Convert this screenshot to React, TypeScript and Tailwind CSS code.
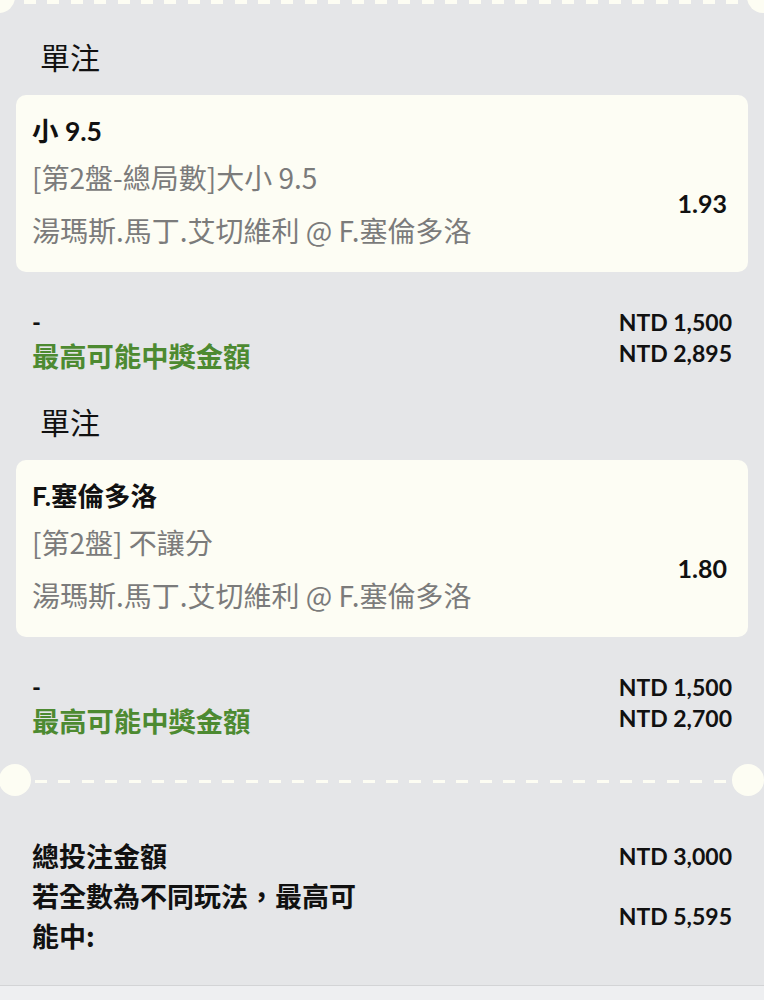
import React from "react";

const latin = "font-['Lato','Noto_Sans_CJK_TC',sans-serif]";
const cjk = "font-['Noto_Sans_CJK_TC','Noto_Sans',sans-serif]";

function Dashes({ className }: { className: string }) {
  return (
    <div
      className={
        "h-[3px] bg-[repeating-linear-gradient(to_right,#fdfdf3_0px,#fdfdf3_12px,transparent_12px,transparent_23.4px)] " +
        className
      }
    />
  );
}

function Bet({
  title,
  market,
  match,
  odds,
  stake,
  win,
}: {
  title: string;
  market: string;
  match: string;
  odds: string;
  stake: string;
  win: string;
}) {
  return (
    <div className="flex flex-col">
      <div className={`pl-10 h-10 leading-[40px] text-[30px] text-[#111] ${cjk}`}>單注</div>
      <div className="mx-4 mt-[19px] h-[177px] rounded-[10px] bg-[#fdfdf4] flex px-4 pt-4">
        <div className="flex-1 flex flex-col">
          <div className={`h-10 leading-[40px] text-[26.5px] font-bold text-[#111] ${latin}`}>{title}</div>
          <div className={`h-[52px] leading-[52px] text-[28px] text-[#7b7b7b] ${cjk}`}>{market}</div>
          <div className={`h-[54px] leading-[54px] text-[28px] text-[#7b7b7b] ${cjk}`}>{match}</div>
        </div>
        <div className={`pt-[76px] pr-[5px] h-[32px] leading-[32px] text-[25px] font-bold text-[#111] box-content ${latin}`}>
          {odds}
        </div>
      </div>
      <div className="mt-[34px] px-8 flex justify-between">
        <div className="flex flex-col">
          <div className={`h-8 leading-[32px] text-[24px] font-bold text-[#111] ${latin}`}>-</div>
          <div className={`h-[34px] leading-[34px] text-[27.3px] font-bold text-[#4d8a31] ${cjk}`}>最高可能中獎金額</div>
        </div>
        <div className={`flex flex-col items-end text-[23px] font-bold text-[#111] ${latin}`}>
          <div className="h-[31px] leading-[31px] mt-[1px]">{stake}</div>
          <div className="h-[31px] leading-[31px]">{win}</div>
        </div>
      </div>
    </div>
  );
}

export default function App() {
  return (
    <div className="w-[764px] h-[1000px] bg-[#e5e6e8] overflow-hidden relative flex flex-col">
      {/* top divider */}
      <div className="relative h-[4px]">
        <div className="absolute left-[-17px] top-[-19px] w-8 h-8 rounded-full bg-[#fdfdf3]" />
        <div className="absolute right-[-15px] top-[-19px] w-8 h-8 rounded-full bg-[#fdfdf3]" />
        <Dashes className="mx-[24px] h-[4px]" />
      </div>

      <div className="mt-[32px]">
        <Bet
          title="小 9.5"
          market="[第2盤-總局數]大小 9.5"
          match="湯瑪斯.馬丁.艾切維利 @ F.塞倫多洛"
          odds="1.93"
          stake="NTD 1,500"
          win="NTD 2,895"
        />
      </div>
      <div className="mt-[29px]">
        <Bet
          title="F.塞倫多洛"
          market="[第2盤] 不讓分"
          match="湯瑪斯.馬丁.艾切維利 @ F.塞倫多洛"
          odds="1.80"
          stake="NTD 1,500"
          win="NTD 2,700"
        />
      </div>

      {/* middle divider */}
      <div className="relative mt-[27px] h-8 flex items-center">
        <div className="absolute left-[-1px] top-0 w-8 h-8 rounded-full bg-[#fdfdf3]" />
        <div className="absolute right-0 top-0 w-8 h-8 rounded-full bg-[#fdfdf3]" />
        <Dashes className="ml-[35px] mr-[35px] flex-1 mt-[3px]" />
      </div>

      {/* totals */}
      <div className="mt-[40px] px-8 grid grid-cols-[1fr_auto] items-center">
        <div className={`h-10 leading-[40px] text-[27px] font-bold text-[#111] ${cjk}`}>總投注金額</div>
        <div className={`text-[23px] font-bold text-[#111] ${latin}`}>NTD 3,000</div>
        <div className={`w-[340px] leading-[40px] text-[27px] font-bold text-[#111] ${cjk}`}>
          若全數為不同玩法，最高可能中:
        </div>
        <div className={`text-[23px] font-bold text-[#111] ${latin}`}>NTD 5,595</div>
      </div>

      <div className="mt-auto h-[15px] border-t border-[#d3d4d6] bg-[#eeeff1]" />
    </div>
  );
}
